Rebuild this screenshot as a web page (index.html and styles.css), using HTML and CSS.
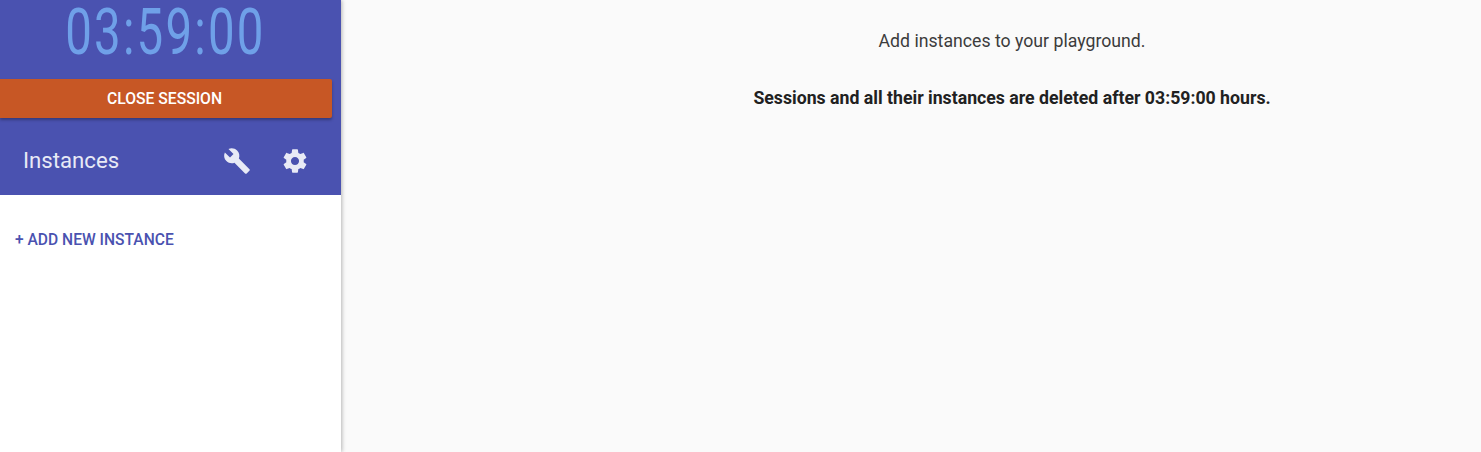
FILE: index.html
```
<!DOCTYPE html>
<html lang="en">
<head>
<meta charset="utf-8">
<title>Playground</title>
<link rel="stylesheet" href="styles.css">
</head>
<body>
<div class="layout">
  <aside class="sidebar">
    <div class="sidebar-head">
      <div class="timer"><span class="timer-text">03:59:00</span></div>
      <button class="close-btn">CLOSE SESSION</button>
      <div class="toolbar">
        <span class="toolbar-title">Instances</span>
        <span class="tools">
          <svg class="icon" viewBox="0 0 24 24"><path d="M22.7 19l-9.1-9.1c.9-2.3.4-5-1.5-6.900-2-2-5-2.4-7.4-1.3L9 6 6 9 1.600 4.700C.4 7.100.9 10.100 2.900 12.100c1.900 1.900 4.600 2.400 6.900 1.500l9.100 9.100c.4.4 1 .4 1.400 0l2.300-2.300c.5-.4.5-1.100.100-1.400z"/></svg>
          <svg class="icon" viewBox="0 0 24 24"><path d="M19.430 12.980c.04-.32.07-.64.07-.98s-.03-.66-.07-.98l2.110-1.650c.19-.15.24-.42.12-.64l-2-3.460c-.12-.22-.39-.3-.61-.22l-2.490 1c-.52-.4-1.080-.73-1.690-.98l-.38-2.650C14.460 2.180 14.250 2 14 2h-4c-.25 0-.46.18-.49.42l-.38 2.650c-.61.25-1.170.59-1.690.98l-2.490-1c-.23-.09-.49 0-.61.22l-2 3.460c-.13.22-.07.49.12.64l2.110 1.650c-.04.32-.07.65-.07.98s.03.66.07.98l-2.110 1.650c-.19.15-.24.42-.12.64l2 3.460c.12.22.39.3.61.22l2.490-1c.52.4 1.080.73 1.690.98l.38 2.650c.03.24.24.42.49.42h4c.25 0 .46-.18.49-.42l.38-2.650c.61-.25 1.170-.59 1.690-.98l2.490 1c.23.09.49 0 .61-.22l2-3.460c.12-.22.07-.49-.12-.64l-2.110-1.650zM12 15.500c-1.930 0-3.500-1.570-3.500-3.500s1.570-3.500 3.500-3.500 3.500 1.570 3.500 3.500-1.570 3.500-3.500 3.500z"/></svg>
        </span>
      </div>
    </div>
    <div class="sidebar-body">
      <a class="add-link">+ ADD NEW INSTANCE</a>
    </div>
  </aside>
  <main class="content">
    <p class="msg">Add instances to your playground.</p>
    <p class="msg strong">Sessions and all their instances are deleted after 03:59:00 hours.</p>
  </main>
</div>
</body>
</html>
```
FILE: styles.css
```
* { box-sizing: border-box; }
html, body { margin: 0; height: 100%; overflow: hidden; }
body { font-family: Roboto, "Liberation Sans", sans-serif; background: #fafafa; color: #212121; }
.layout { display: flex; height: 452px; }
.sidebar {
  width: 341px; flex: none; background: #fff; position: relative; z-index: 1;
  box-shadow: 1px 0 4px rgba(0,0,0,.28);
  display: flex; flex-direction: column;
}
.sidebar-head { background: #4a52b0; height: 195px; display: flex; flex-direction: column; }
.timer { height: 79px; display: flex; justify-content: center; padding-right: 10px; }
.timer-text {
  font-family: Roboto, sans-serif; font-size: 64px; line-height: 65px; font-weight: 400;
  color: #6fa0e8; transform: scaleX(.74); white-space: nowrap; letter-spacing: 3px;
}
.close-btn {
  width: 332px; height: 39px; border: 0; border-radius: 0 2px 2px 0; padding: 0 3px 0 0; background: #c75725; color: #fff;
  font: 500 15.7px Roboto, sans-serif;
  box-shadow: 0 2px 3px rgba(0,0,0,.3); flex: none;
}
.toolbar { flex: 1; display: flex; align-items: center; justify-content: space-between; padding: 8px 32px 0 23px; color: #e8eaf6; }
.toolbar-title { font-size: 22.2px; margin-bottom: 2px; }
.tools { display: flex; gap: 30px; }
.icon { width: 28px; height: 28px; fill: #e8eaf6; display: block; }
.sidebar-body { flex: 1; padding: 36px 15px; }
.add-link { font-size: 15.6px; font-weight: 500; line-height: 18px; color: #4a52b0; display: block; }
.content { flex: 1; text-align: center; font-size: 17.7px; padding: 31px 0 0 202px; }
.msg { margin: 0 0 37px; line-height: 20px; color: #3c3c3c; }
.strong { font-weight: 700; color: #212121; }
```
